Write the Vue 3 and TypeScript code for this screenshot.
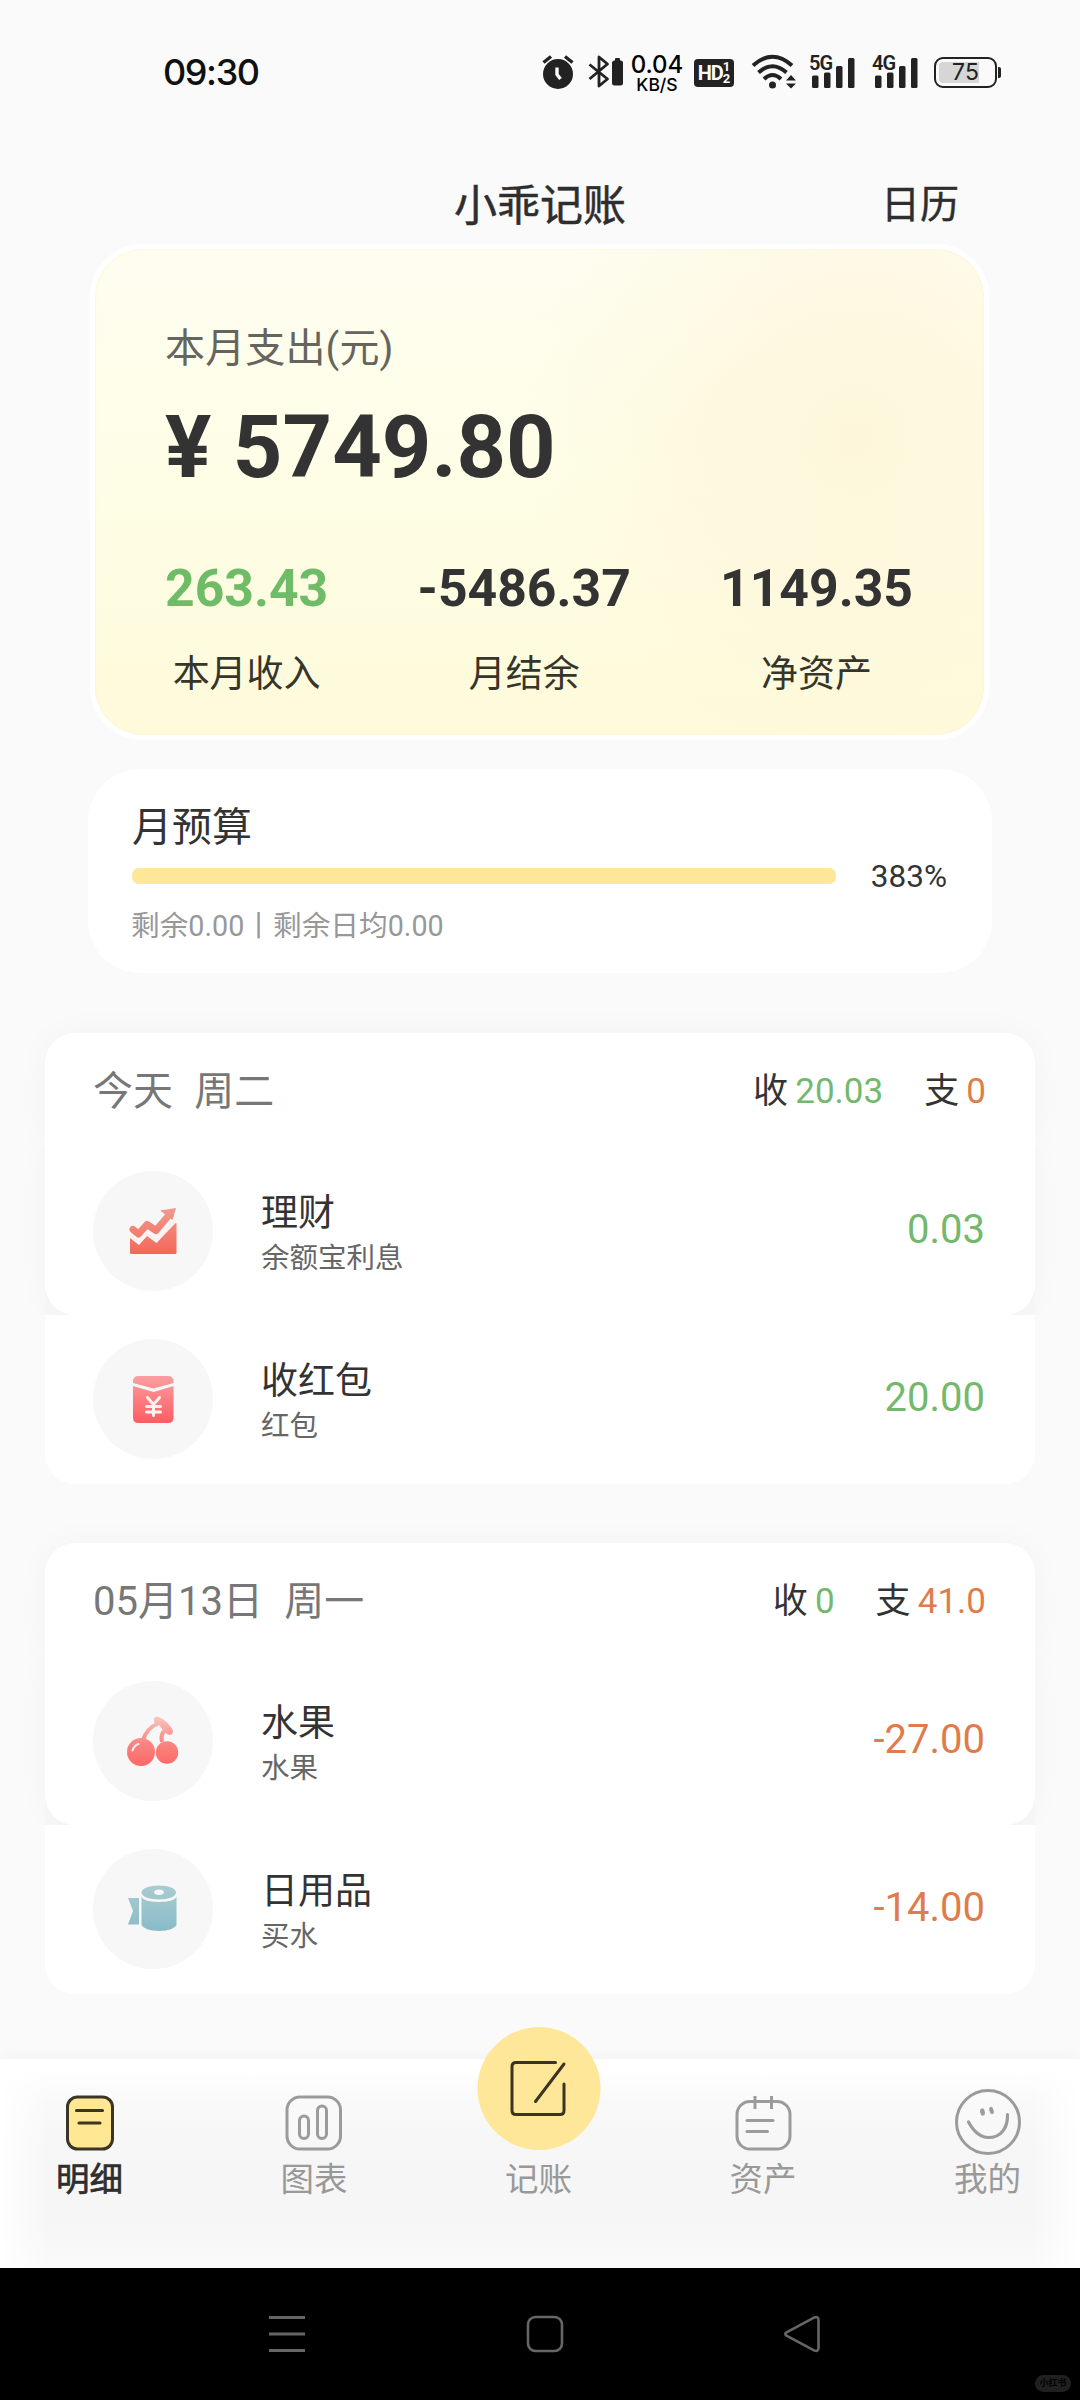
<script setup lang="ts">
type Kind = 'chart' | 'packet' | 'cherry' | 'roll'

interface Entry {
  kind: Kind
  name: string
  note: string
  amount: string
  tone: 'in' | 'out'
}

interface Day {
  date: string
  weekday: string
  income: string
  spend: string
  entries: Entry[]
}

const stats = [
  { value: '263.43', label: '本月收入', green: true },
  { value: '-5486.37', label: '月结余', green: false },
  { value: '1149.35', label: '净资产', green: false },
]

const days: Day[] = [
  {
    date: '今天',
    weekday: '周二',
    income: '20.03',
    spend: '0',
    entries: [
      { kind: 'chart', name: '理财', note: '余额宝利息', amount: '0.03', tone: 'in' },
      { kind: 'packet', name: '收红包', note: '红包', amount: '20.00', tone: 'in' },
    ],
  },
  {
    date: '05月13日',
    weekday: '周一',
    income: '0',
    spend: '41.0',
    entries: [
      { kind: 'cherry', name: '水果', note: '水果', amount: '-27.00', tone: 'out' },
      { kind: 'roll', name: '日用品', note: '买水', amount: '-14.00', tone: 'out' },
    ],
  },
]

const signals = ['5G', '4G']
</script>

<template>
  <div class="phone">
    <header class="status">
      <span class="clock">09:30</span>
      <div class="status-icons">
        <svg class="i-alarm" width="32" height="36" viewBox="0 0 32 36">
          <circle cx="16" cy="20" r="15" fill="#222" />
          <path d="M1.5 8.5 9 2.500M30.500 8.500 23 2.500" stroke="#222" stroke-width="3.400" fill="none" />
          <path d="M15 13.500v7l3.500 4.500" stroke="#fafafa" stroke-width="3.400" fill="none" />
        </svg>
        <svg class="i-bt" width="36" height="36" viewBox="0 0 36 36">
          <path d="M1.500 10.500 19.500 25 11 32V3l8.500 7L1.500 25" stroke="#222" stroke-width="2.800" fill="none" stroke-linejoin="round" />
          <rect x="24" y="6.500" width="11" height="25" rx="2.500" fill="#222" />
          <rect x="27" y="4" width="5" height="4" rx="1" fill="#222" />
        </svg>
        <div class="speed">
          <span class="speed-n">0.04</span>
          <span class="speed-u">KB/S</span>
        </div>
        <div class="hd">
          <span class="hd-t">HD</span>
          <span class="hd-n"><i>1</i><i>2</i></span>
        </div>
        <svg class="i-wifi" width="46" height="36" viewBox="0 0 46 36">
          <g fill="none" stroke="#222" stroke-width="4">
            <path d="M2 11.500Q21.500-6 41 11.500" />
            <path d="M7.500 18.500Q21.500 6 35.500 18.500" />
            <path d="M13 25Q21.500 17 30 25" />
          </g>
          <circle cx="21.500" cy="31" r="3.500" fill="#222" />
          <path d="M35 26.500 40 21l5 5.500zM35 29.500l5 5 5-5z" fill="#222" />
        </svg>
        <div v-for="s in signals" :key="s" class="signal">
          <svg width="46" height="36" viewBox="0 0 46 36">
            <g fill="#222">
              <rect x="3" y="21.500" width="6.500" height="12.500" rx="1.500" />
              <rect x="15" y="18.500" width="6.500" height="15.500" rx="1.500" />
              <rect x="27" y="12" width="6.500" height="22" rx="1.500" />
              <rect x="39" y="4" width="6.500" height="30" rx="1.500" />
            </g>
          </svg>
          <span class="net">{{ s }}</span>
        </div>
        <div class="battery"><span class="charge"></span><b>75</b></div>
        <span class="cap"></span>
      </div>
    </header>

    <div class="titlebar">
      <span></span>
      <h1>小乖记账</h1>
      <span class="calendar">日历</span>
    </div>

    <section class="summary">
      <div class="sum-label">本月支出(元)</div>
      <div class="sum-value">¥ 5749.80</div>
      <div class="stats">
        <div v-for="s in stats" :key="s.label" class="stat">
          <div class="stat-v" :class="{ green: s.green }">{{ s.value }}</div>
          <div class="stat-l">{{ s.label }}</div>
        </div>
      </div>
    </section>

    <section class="budget">
      <div class="b-title">月预算</div>
      <div class="b-row">
        <div class="b-bar"></div>
        <span class="b-pct">383%</span>
      </div>
      <div class="b-note">剩余0.00丨剩余日均0.00</div>
    </section>

    <section v-for="d in days" :key="d.date" class="day">
      <div class="day-top">
        <div class="day-head">
          <span class="day-date">{{ d.date }}&nbsp;&nbsp;{{ d.weekday }}</span>
          <span class="day-sum">收 <em class="in">{{ d.income }}</em></span>
          <span class="day-sum">支 <em class="out">{{ d.spend }}</em></span>
        </div>
      </div>
      <div v-for="e in d.entries" :key="e.name" class="entry">
        <div class="badge">
          <svg v-if="e.kind === 'chart'" width="48" height="48" viewBox="0 0 48 48">
            <defs>
              <linearGradient id="gc" x1="0" y1="0" x2="0" y2="48" gradientUnits="userSpaceOnUse">
                <stop offset="0" stop-color="#ef9d90" /><stop offset="1" stop-color="#f56558" />
              </linearGradient>
            </defs>
            <path d="M1 31 10 38 18 29 27.500 36 46 16.500Q47.500 15.500 47.500 17V45.500Q47.500 47 46 47H2.500Q1 47 1 45.500Z" fill="url(#gc)" />
            <path d="M4 22.500 9.500 27 18 17.500 27 23.500 40 8" fill="none" stroke="url(#gc)" stroke-width="7" stroke-linecap="round" stroke-linejoin="round" />
            <path d="M31 3.500 47 1 43.500 13Z" fill="url(#gc)" />
            <path d="M1 28.500 10 35.500 18 26.500 27.500 33 46.500 12.500" fill="none" stroke="#fdf1ef" stroke-width="2.500" />
          </svg>
          <svg v-else-if="e.kind === 'packet'" width="48" height="48" viewBox="0 0 48 48">
            <defs>
              <linearGradient id="gp" x1="0" y1="0" x2="0" y2="48" gradientUnits="userSpaceOnUse">
                <stop offset="0" stop-color="#faa0a3" /><stop offset="1" stop-color="#ff5c60" />
              </linearGradient>
            </defs>
            <path d="M4 8V6.500Q4 1 9.500 1H39Q44.500 1 44.500 6.500V8L24.500 13.500Z" fill="url(#gp)" />
            <path d="M4 11 24.500 17 44.500 11V42.500Q44.500 48 39 48H9.500Q4 48 4 42.500Z" fill="url(#gp)" />
            <path d="M18.500 22.500 24.500 29.500 30.500 22.500M24.500 29.500V40.500M17.500 31.500H31.500M17.500 37H31.500" fill="none" stroke="#fff3f1" stroke-width="3" stroke-linecap="round" />
          </svg>
          <svg v-else-if="e.kind === 'cherry'" width="54" height="54" viewBox="0 0 54 54">
            <defs>
              <linearGradient id="gr" x1="0" y1="0" x2="0" y2="54" gradientUnits="userSpaceOnUse">
                <stop offset="0" stop-color="#f9ccc8" /><stop offset=".55" stop-color="#f88480" /><stop offset="1" stop-color="#ff6664" />
              </linearGradient>
            </defs>
            <circle cx="15" cy="38" r="14" fill="url(#gr)" />
            <circle cx="41" cy="38.500" r="11.200" fill="url(#gr)" />
            <path d="M17 26Q21 14 32 9.500M36 28Q34 19 40 16" fill="none" stroke="url(#gr)" stroke-width="4" />
            <path d="M28.500 9Q26.500 2.500 31 2.500 39 5 45 13 49 18 45.500 20.500 42 22 38 17.500L33 11Z" fill="url(#gr)" />
            <path d="M6.500 36.500Q8 31.500 12.500 30" fill="none" stroke="#fcebe9" stroke-width="2" stroke-linecap="round" />
          </svg>
          <svg v-else width="50" height="48" viewBox="0 0 50 48">
            <defs>
              <linearGradient id="gt" x1="0" y1="0" x2="0" y2="48" gradientUnits="userSpaceOnUse">
                <stop offset="0" stop-color="#a9ccd1" /><stop offset="1" stop-color="#87bbc7" />
              </linearGradient>
            </defs>
            <path d="M0 13H11V39.500H0L5 26Z" fill="url(#gt)" />
            <path d="M13.500 11Q14 16.500 31 17 48 16.500 48.500 11V40Q46 45.500 31 46 16 45.500 13.500 40Z" fill="url(#gt)" />
            <path fill-rule="evenodd" d="M31 .5C41 .5 48 3.500 48 7.500S41 14.500 31 14.500 13.500 11.500 13.500 7.500 21 .5 31 .5ZM31 4.500C28 4.500 26 5.700 26 7.200S28 10 31 10 36 8.700 36 7.200 34 4.500 31 4.500Z" fill="url(#gt)" />
          </svg>
        </div>
        <div class="texts">
          <div class="name">{{ e.name }}</div>
          <div class="note">{{ e.note }}</div>
        </div>
        <div class="amount" :class="e.tone">{{ e.amount }}</div>
      </div>
    </section>

    <nav class="tabs">
      <div class="tab active">
        <div class="ico">
          <svg width="50" height="56" viewBox="0 0 50 56">
            <rect x="2.500" y="2" width="45" height="52" rx="10" fill="#ffe793" stroke="#3a3524" stroke-width="3" />
            <path d="M11.500 15.500H37.500M14 28H35" stroke="#3a3524" stroke-width="3.100" stroke-linecap="round" />
          </svg>
        </div>
        <span>明细</span>
      </div>
      <div class="tab">
        <div class="ico">
          <svg width="58" height="56" viewBox="0 0 58 56" fill="none" stroke="#9b9b9b" stroke-width="3">
            <rect x="2" y="2" width="53.500" height="52" rx="13" />
            <rect x="14.500" y="21" width="9" height="22.500" rx="4.500" />
            <rect x="32.500" y="11" width="9" height="32.500" rx="4.500" />
          </svg>
        </div>
        <span>图表</span>
      </div>
      <div class="tab">
        <div class="fab">
          <svg width="58" height="58" viewBox="0 0 58 58" fill="none" stroke="#3a3520" stroke-width="3" stroke-linecap="round">
            <path d="M46 2.500H6.500Q2.500 2.500 2.500 6.500V50.500Q2.500 54.500 6.500 54.500H50.500Q54.500 54.500 54.500 50.500V24" />
            <path d="M54.500 4 26 41.500" />
          </svg>
        </div>
        <div class="ico"></div>
        <span>记账</span>
      </div>
      <div class="tab">
        <div class="ico">
          <svg width="58" height="56" viewBox="0 0 58 56" fill="none" stroke="#9b9b9b" stroke-width="3">
            <rect x="3" y="6.500" width="53" height="47.500" rx="13" />
            <path d="M21 1V14M37.500 1V14" />
            <path d="M13 25.500H39M13 36.500H33.500" stroke-linecap="round" />
          </svg>
        </div>
        <span>资产</span>
      </div>
      <div class="tab">
        <div class="ico">
          <svg class="smile" width="68" height="68" viewBox="0 0 68 68" fill="none" stroke="#9b9b9b" stroke-width="3">
            <circle cx="34" cy="34" r="31.500" />
            <path d="M14.500 34C20 44 27 49.500 34.500 49.500 46 49.500 54 41 53.500 26.500" stroke-width="3.200" stroke-linecap="round" />
            <g fill="#9b9b9b" stroke="none">
              <ellipse cx="28.500" cy="24" rx="2.300" ry="3.700" transform="rotate(-12 28.500 24)" />
              <ellipse cx="37.500" cy="22.500" rx="2.100" ry="3.700" transform="rotate(-15 37.500 22.500)" />
            </g>
          </svg>
        </div>
        <span>我的</span>
      </div>
    </nav>

    <footer class="system">
      <svg width="38" height="38" viewBox="0 0 38 38" fill="none" stroke="#666" stroke-width="2.800">
        <path d="M1 2.500H37M1 19H37M1 35.500H37" />
      </svg>
      <svg width="38" height="38" viewBox="0 0 38 38" fill="none" stroke="#666" stroke-width="2.600">
        <rect x="2" y="2" width="34" height="34" rx="7.500" />
      </svg>
      <svg width="38" height="38" viewBox="0 0 38 38" fill="none" stroke="#666" stroke-width="2.600" stroke-linejoin="round">
        <path d="M3.500 17.300 31 2.600Q35.500 1 35.500 5V33Q35.500 37 31 35.400L3.500 20.700Q1 19 3.500 17.300Z" />
      </svg>
      <span class="mark">小红书</span>
    </footer>
  </div>
</template>

<style>
body {
  background: #fafafa;
}
</style>

<style scoped>
.phone {
  width: 1080px;
  height: 2400px;
  display: flex;
  flex-direction: column;
  background: #fafafa;
  color: #333;
  font-family: Roboto, "Noto Sans CJK SC", sans-serif;
  overflow: hidden;
  line-height: 1;
}
.status {
  height: 145px;
  flex: none;
  display: flex;
  justify-content: space-between;
  align-items: flex-start;
  padding: 54px 79px 0 163px;
  box-sizing: border-box;
  color: #222;
}
.clock {
  font: 500 36px/36px Inter, sans-serif;
  letter-spacing: -1.4px;
  color: #111;
}
.status-icons {
  display: flex;
  align-items: flex-start;
  height: 36px;
}
.i-bt {
  margin-left: 14px;
}
.speed {
  width: 52px;
  margin-left: 7px;
  display: flex;
  flex-direction: column;
  align-items: center;
  color: #000;
  font-family: Inter, sans-serif;
  font-weight: 500;
}
.speed-n {
  font-size: 24px;
  line-height: 22px;
}
.speed-u {
  font-size: 17.5px;
  line-height: 17px;
}
.hd {
  width: 40px;
  height: 28px;
  margin: 5px 0 0 11px;
  background: #222;
  border-radius: 4px;
  color: #fafafa;
  display: flex;
  justify-content: center;
  align-items: center;
  font-weight: 700;
}
.hd-t {
  font-size: 20px;
  letter-spacing: -1px;
}
.hd-n {
  display: flex;
  flex-direction: column;
  font-size: 13px;
  line-height: 12px;
}
.hd-n i {
  font-style: normal;
}
.i-wifi {
  margin-left: 17px;
}
.signal {
  position: relative;
  width: 46px;
  height: 36px;
  margin-left: 12px;
}
.signal + .signal {
  margin-left: 17px;
}
.net {
  position: absolute;
  left: 0;
  top: 0;
  font-size: 20px;
  line-height: 18px;
  font-weight: 600;
  letter-spacing: -1px;
}
.battery {
  width: 63px;
  height: 31px;
  box-sizing: border-box;
  margin: 3px 0 0 16px;
  border: 2.500px solid #222;
  border-radius: 9px;
  position: relative;
  display: flex;
  align-items: center;
  justify-content: center;
}
.charge {
  position: absolute;
  left: 3px;
  top: 3px;
  width: 40px;
  height: 21px;
  border-radius: 4px 0 0 4px;
  background: #d6d6d6;
}
.battery b {
  position: relative;
  font: 400 23px/27px Inter, sans-serif;
}
.cap {
  width: 3px;
  height: 11px;
  margin: 13px 0 0 1px;
  background: #222;
  border-radius: 0 2px 2px 0;
}
.titlebar {
  flex: none;
  height: 99px;
  display: grid;
  grid-template-columns: 1fr auto 1fr;
  align-items: flex-start;
  padding: 0 121px;
  color: #2e2e2e;
}
.titlebar h1 {
  margin: 40px 0 0;
  font-size: 43px;
  line-height: 43px;
  font-weight: 400;
  -webkit-text-stroke: 0.5px #2e2e2e;
}
.calendar {
  justify-self: end;
  margin-top: 41px;
  font-size: 39px;
  -webkit-text-stroke: 0.4px #2e2e2e;
}
.summary {
  flex: none;
  width: 899px;
  height: 496px;
  box-sizing: border-box;
  margin-left: 90px;
  border: 5px solid #fff;
  border-radius: 53px;
  padding: 80px 71px 0 70px;
  background:
    radial-gradient(circle at 760px 190px, rgba(253, 245, 217, 0.9), rgba(253, 248, 224, 0) 340px),
    linear-gradient(#fefdf0, #fefee7 45%, #fefada);
  background-clip: padding-box;
  box-shadow: inset 0 0 3px #fbf2cf;
}
.sum-label {
  font-size: 40px;
  line-height: 40px;
  letter-spacing: 0.15px;
  color: #66655d;
}
.sum-value {
  margin-top: 35px;
  font-size: 86.5px;
  line-height: 87px;
  font-weight: 700;
}
.stats {
  display: flex;
  justify-content: space-between;
  margin-top: 72px;
}
.stat {
  text-align: center;
}
.stat-v {
  font-size: 51.7px;
  line-height: 52px;
  font-weight: 700;
}
.stat-v.green {
  color: #6fbb67;
}
.stat-l {
  margin-top: 41px;
  font-size: 37px;
  line-height: 37px;
  color: #36352a;
}
.budget {
  flex: none;
  margin: 29px 0 0 88px;
  width: 904px;
  height: 204px;
  box-sizing: border-box;
  border-radius: 52px;
  background: #fff;
  padding: 39px 45px 0 44px;
}
.b-title {
  font-size: 40px;
  line-height: 40px;
}
.b-row {
  display: flex;
  align-items: center;
  justify-content: space-between;
  margin-top: 12px;
  height: 32px;
}
.b-bar {
  width: 704px;
  height: 16px;
  border-radius: 7px;
  background: #ffe799;
}
.b-pct {
  font-size: 31.5px;
  line-height: 32px;
  padding-top: 1px;
}
.b-note {
  margin-top: 18px;
  margin-left: -1px;
  font-size: 28.7px;
  line-height: 32px;
  color: #989898;
}
.day {
  flex: none;
  width: 990px;
  height: 451px;
  margin: 60px 0 0 45px;
  border-radius: 30px;
  background: linear-gradient(#f7f7f7, #f7f7f7) 0 240px / 100% 42px no-repeat;
  display: flex;
  flex-direction: column;
}
.day + .day {
  margin-top: 59px;
}
.day-top {
  height: 114px;
  background: #fff;
  border-radius: 30px 30px 0 0;
  box-shadow: 0 0 36px rgba(0, 0, 0, 0.03);
}
.day-head {
  display: flex;
  align-items: center;
  height: 116px;
  padding: 0 49px 0 48px;
}
.day-date {
  flex: 1;
  font-size: 40px;
  padding-top: 2px;
  word-spacing: 0.7px;
  color: #777;
}
.day-sum {
  margin-left: 41px;
  font-size: 35px;
  word-spacing: -1.5px;
}
.day-sum em {
  font-style: normal;
}
.in {
  color: #74b86e;
}
.out {
  color: #e07c4b;
}
.entry {
  height: 168px;
  background: #fff;
  display: flex;
  align-items: flex-start;
  box-sizing: border-box;
  padding: 24px 50px 0 48px;
}
.entry:nth-child(2) {
  border-radius: 0 0 30px 30px;
  box-shadow: 0 0 36px rgba(0, 0, 0, 0.03);
  clip-path: inset(0 -45px 0 -45px);
}
.entry:last-child {
  height: 169px;
  border-radius: 0 0 30px 30px;
}
.badge {
  width: 120px;
  height: 120px;
  border-radius: 50%;
  background: #f7f7f7;
  display: flex;
  align-items: center;
  justify-content: center;
}
.texts {
  margin-left: 48px;
  flex: 1;
}
.name {
  margin-top: 24px;
  font-size: 37px;
  line-height: 37px;
}
.note {
  margin-top: 12px;
  font-size: 28.5px;
  line-height: 29px;
  color: #666;
}
.amount {
  margin-top: 39px;
  font-size: 40px;
  line-height: 40px;
}
.tabs {
  flex: none;
  height: 209px;
  margin-top: auto;
  box-sizing: border-box;
  padding: 36px 59px 0 56px;
  display: flex;
  justify-content: space-between;
  background:
    linear-gradient(to right, #fff, rgba(255, 255, 255, 0) 50px),
    linear-gradient(to left, #fff, rgba(255, 255, 255, 0) 50px),
    linear-gradient(#fff 8px, #f9f9f9 45px, #f6f6f6 100px, #f6f6f6 165px, #fafafa);
  box-shadow: 0 -2px 14px rgba(0, 0, 0, 0.04);
  color: #999;
}
.tab {
  position: relative;
  width: 67px;
  display: flex;
  flex-direction: column;
  align-items: center;
  font-size: 33.5px;
  white-space: nowrap;
}
.tab > span {
  margin-top: 12px;
  line-height: 34px;
}
.ico {
  height: 56px;
  display: flex;
  align-items: center;
  justify-content: center;
}
.smile {
  margin: -6px 0;
  flex: none;
  position: relative;
  top: -1px;
}
.active {
  color: #2e2e2e;
}
.active > span {
  -webkit-text-stroke: 0.7px #2e2e2e;
}
.fab {
  position: absolute;
  left: 50%;
  top: -68px;
  width: 123px;
  height: 123px;
  transform: translateX(-50%);
  border-radius: 50%;
  background: #ffe799;
  display: flex;
  align-items: center;
  justify-content: center;
}
.system {
  flex: none;
  height: 132px;
  background: #000;
  position: relative;
  display: flex;
  justify-content: space-between;
  padding: 47px 259px 0 268px;
  box-sizing: border-box;
}
.mark {
  position: absolute;
  right: 9px;
  bottom: 8px;
  width: 36px;
  height: 17px;
  border-radius: 9px;
  background: #202020;
  color: #000;
  font-size: 9px;
  line-height: 17px;
  font-weight: 700;
  text-align: center;
}
</style>
